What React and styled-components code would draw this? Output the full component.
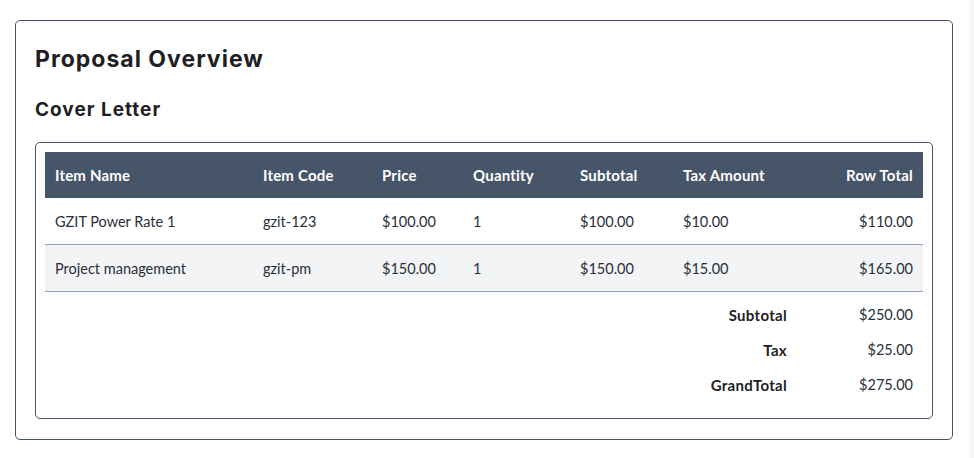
import React from "react";
import styled, { createGlobalStyle } from "styled-components";

const GlobalStyles = createGlobalStyle`
  body {
    margin: 0;
    background: #ffffff;
    font-family: Lato, "Liberation Sans", sans-serif;
    color: #1f2937;
  }
`;

const Page = styled.div`
  display: flex;
  min-height: 458px;
`;

const Main = styled.main`
  flex: 1;
  padding: 20px 17px 18px 15px;
`;

const SideStrip = styled.div`
  width: 4px;
  background: #f6f7f9;
`;

const Card = styled.section`
  border: 1px solid #475569;
  border-radius: 5px;
  padding: 19px 19px 20px;
`;

const Title = styled.h1`
  margin: 4px 0 0;
  font-family: Inter, "Liberation Sans", sans-serif;
  font-size: 23px;
  line-height: 30px;
  font-weight: 700;
  letter-spacing: 1px;
  color: #1e1e24;
`;

const SubTitle = styled.h2`
  margin: 24px 0 20px;
  font-family: Inter, "Liberation Sans", sans-serif;
  font-size: 19px;
  line-height: 24px;
  font-weight: 700;
  letter-spacing: 1px;
  color: #1e1e24;
`;

const InnerCard = styled.div`
  border: 1px solid #475569;
  border-radius: 5px;
  padding: 9px 9px 16px;
`;

const Table = styled.table`
  width: 100%;
  border-collapse: collapse;
  table-layout: fixed;
  font-size: 14.5px;
`;

const HeadCell = styled.th`
  background: #475569;
  color: #ffffff;
  font-size: 15px;
  font-weight: 700;
  letter-spacing: 0.2px;
  text-align: ${(p) => (p.right ? "right" : "left")};
  padding: 13px 10px;
  line-height: 20px;
  white-space: nowrap;
`;

const Row = styled.tr`
  background: ${(p) => (p.striped ? "#f3f4f6" : "#ffffff")};
  border-bottom: 1px solid #94a3b8;
`;

const Cell = styled.td`
  padding: 13.5px 10px 12.5px;
  line-height: 20px;
  color: #2a2f3a;
  text-align: ${(p) => (p.right ? "right" : "left")};
  white-space: nowrap;
`;

const Summary = styled.div`
  display: flex;
  flex-direction: column;
  padding-top: 5px;
`;

const SummaryRow = styled.div`
  display: flex;
  justify-content: flex-end;
  align-items: center;
  height: 35px;
  font-size: 14.5px;
`;

const SummaryLabel = styled.span`
  font-size: 15px;
  font-weight: 700;
  letter-spacing: 0.3px;
  color: #1e1e24;
  padding-right: 10px;
  text-align: right;
`;

const SummaryValue = styled.span`
  width: 126px;
  box-sizing: border-box;
  padding-right: 10px;
  text-align: right;
  color: #2a2f3a;
`;

const columns = [
  { label: "Item Name", width: 208 },
  { label: "Item Code", width: 119 },
  { label: "Price", width: 91 },
  { label: "Quantity", width: 107 },
  { label: "Subtotal", width: 103 },
  { label: "Tax Amount", width: 124 },
  { label: "Row Total", width: 126, right: true },
];

const items = [
  ["GZIT Power Rate 1", "gzit-123", "$100.00", "1", "$100.00", "$10.00", "$110.00"],
  ["Project management", "gzit-pm", "$150.00", "1", "$150.00", "$15.00", "$165.00"],
];

const totals = [
  ["Subtotal", "$250.00"],
  ["Tax", "$25.00"],
  ["GrandTotal", "$275.00"],
];

export default function App() {
  return (
    <Page>
      <GlobalStyles />
      <Main>
        <Card>
          <Title>Proposal Overview</Title>
          <SubTitle>Cover Letter</SubTitle>
          <InnerCard>
            <Table>
              <colgroup>
                {columns.map((c) => (
                  <col key={c.label} style={{ width: c.width }} />
                ))}
              </colgroup>
              <thead>
                <tr>
                  {columns.map((c) => (
                    <HeadCell key={c.label} right={c.right}>
                      {c.label}
                    </HeadCell>
                  ))}
                </tr>
              </thead>
              <tbody>
                {items.map((row, i) => (
                  <Row key={row[1]} striped={i % 2 === 1}>
                    {row.map((v, j) => (
                      <Cell key={j} right={j === row.length - 1}>
                        {v}
                      </Cell>
                    ))}
                  </Row>
                ))}
              </tbody>
            </Table>
            <Summary>
              {totals.map(([label, value]) => (
                <SummaryRow key={label}>
                  <SummaryLabel>{label}</SummaryLabel>
                  <SummaryValue>{value}</SummaryValue>
                </SummaryRow>
              ))}
            </Summary>
          </InnerCard>
        </Card>
      </Main>
      <SideStrip />
    </Page>
  );
}
